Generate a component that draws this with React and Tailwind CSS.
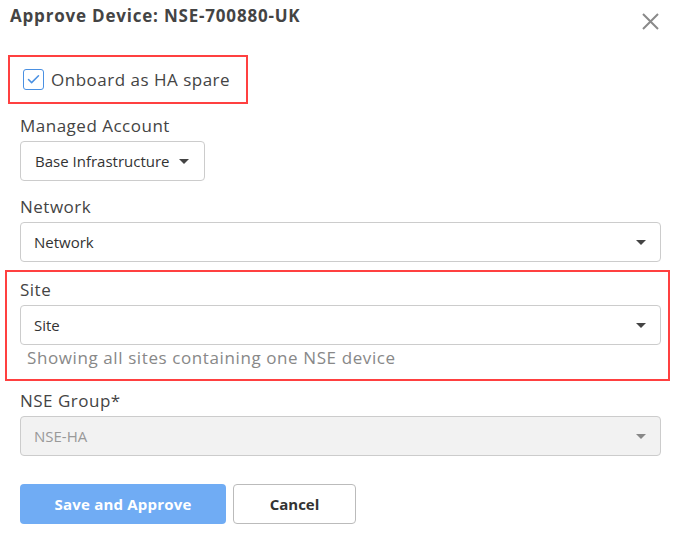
import { Check } from 'lucide-react';

const font = { fontFamily: '"Open Sans", Lato, sans-serif' };

function Caret({ className = '' }) {
  return (
    <svg width="10" height="5" viewBox="0 0 10 5" className={className}>
      <path d="M0 0 L10 0 L5 5 Z" fill="currentColor" />
    </svg>
  );
}

function Select({ value, disabled = false }) {
  return (
    <div
      className={`flex h-10 w-full items-center justify-between rounded-[4px] border border-[#cccccc] pl-[13px] pr-[14px] text-[15px] ${
        disabled ? 'bg-[#f2f2f2] text-[#999999]' : 'bg-white text-[#333333]'
      }`}
    >
      <span>{value}</span>
      <Caret className={disabled ? 'text-[#888888]' : 'text-[#444444]'} />
    </div>
  );
}

function Label({ children }) {
  return <div className="text-[17px] leading-[22px] tracking-[0.5px] text-[#444444]">{children}</div>;
}

export default function App() {
  return (
    <div className="min-h-[543px] w-[681px] bg-white" style={font}>
      <div className="flex h-[32px] items-start justify-between pl-[10px] pr-[22px] pt-[6px]">
        <h1 className="text-[17px] font-bold leading-[20px] tracking-[0.8px] text-[#444444]">Approve Device: NSE-700880-UK</h1>
        <button className="mt-[7px] text-[#8a8a8a]">
          <svg width="17" height="17" viewBox="0 0 17 17">
            <path d="M1 1 L16 16 M16 1 L1 16" stroke="currentColor" strokeWidth="2" />
          </svg>
        </button>
      </div>

      <div className="px-5">
        <div className="-mx-3 mt-[23px] flex h-[49px] w-[240px] items-center gap-[7px] border-2 border-[#ff4040] pl-[13px]">
          <span className="flex h-[21px] w-[21px] items-center justify-center rounded-[3px] border-[1.5px] border-[#4a90e2] bg-white">
            <Check className="h-[15px] w-[15px] text-[#4a90e2]" strokeWidth={2.4} />
          </span>
          <span className="text-[17px] tracking-[0.5px] text-[#444444]">Onboard as HA spare</span>
        </div>

        <div className="mt-[11px]">
          <Label>Managed Account</Label>
          <div className="mt-[4px] flex h-10 w-[185px] items-center gap-[9px] rounded-[4px] border border-[#cccccc] pl-[14px] text-[15px] text-[#333333]">
            <span>Base Infrastructure</span>
            <Caret className="text-[#444444]" />
          </div>
        </div>

        <div className="mt-[15px]">
          <Label>Network</Label>
          <div className="mt-[4px]">
            <Select value="Network" />
          </div>
        </div>

        <div className="-ml-[15px] -mr-[9px] mt-[8px] border-2 border-[#ff4040] pb-[10px] pl-[13px] pr-[7px] pt-[7px]">
          <Label>Site</Label>
          <div className="mt-[4px]">
            <Select value="Site" />
          </div>
          <div className="mt-[2px] pl-[7px] text-[17px] leading-[22px] tracking-[0.6px] text-[#888888]">
            Showing all sites containing one NSE device
          </div>
        </div>

        <div className="mt-[9px]">
          <Label>NSE Group*</Label>
          <div className="mt-[4px]">
            <Select value="NSE-HA" disabled />
          </div>
        </div>

        <div className="mt-[28px] flex gap-[7px]">
          <button className="h-[40px] w-[206px] rounded-[4px] bg-[#70acf4] text-[15px] font-bold tracking-[0.2px] text-white">
            Save and Approve
          </button>
          <button className="h-[40px] w-[123px] rounded-[4px] border border-[#bbbbbb] bg-white text-[15px] font-bold text-[#333333]">
            Cancel
          </button>
        </div>
      </div>
    </div>
  );
}
